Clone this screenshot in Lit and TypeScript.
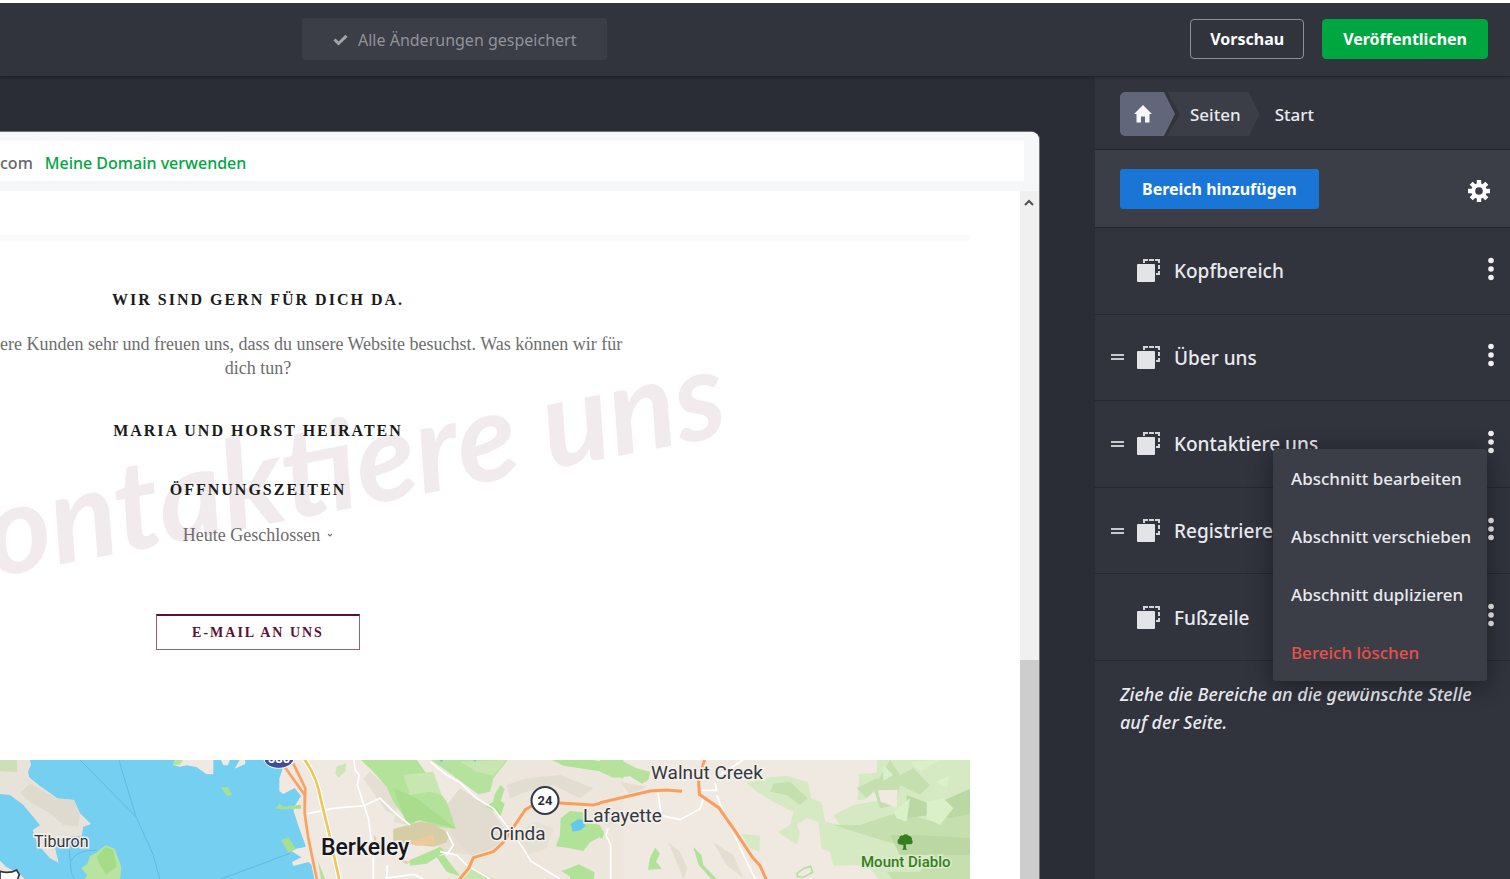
import { LitElement, html, svg, css, nothing } from "lit";
import { customElement, property, state } from "lit/decorators.js";

const duplicateIcon = svg`<svg class="dup" viewBox="0 0 24 23" width="24" height="23" aria-hidden="true">
  <rect x="0" y="5" width="18" height="18" rx="1" fill="#e3e4e7"/>
  <path d="M7 4V1H11M12 1H17M18 1H22V4M22 6V10M22 12V15H19" fill="none" stroke="#d4d6da" stroke-width="2"/>
</svg>`;

@customElement("bay-map")
export class BayMap extends LitElement {
  static styles = css`
    :host { display: block; overflow: hidden; }
    .map { display: block; width: 100%; height: 100%; font-family: Roboto, "Liberation Sans", sans-serif; }
    .town { font-size: 19px; fill: #343841; stroke: #f4f0ea; stroke-width: 3px; paint-order: stroke; }
    .small { font-size: 16px; }
    .city { font-size: 23px; font-weight: 500; fill: #14161f; }
    .park { font-size: 15px; font-weight: 500; fill: #347f1c; stroke: #dcecce; }
    .shield { font-size: 13px; font-weight: 700; fill: #2b2e38; }
    .interstate { font-size: 13px; font-weight: 700; fill: #fff; }
  `;

  render() {
    return html`<svg class="map" viewBox="0 0 970 119" preserveAspectRatio="xMinYMin slice" role="img" aria-label="Karte">
      <rect width="970" height="119" fill="#efe9e2"/>
      <g transform="translate(0 -10) scale(.33333)">
        <path d="M0 28H870L905 135L880 175L900 210L918 290L950 390H0Z" fill="#75cff0"/>
        <path d="M0 28H90L93 45L84 66L88 82L120 108L172 145L222 150L240 190L273 222L250 230L245 258L158 264L176 338L150 325L112 282L98 240L120 226L103 205L70 165L30 135L0 132Z" fill="#e8e3da"/>
        <path d="M0 28H50L52 66L0 64Z" fill="#cddfb4"/>
        <path d="M90 100L172 146L222 150L240 195L235 230L190 225L150 190L95 160L60 130Z" fill="#dfdacf"/>
        <path d="M520 45L530 28H640V72L620 73L590 52L560 46L540 50Z" fill="#efe9e2"/>
        <path d="M518 46L524 28H550L540 44Z" fill="#b5e39b"/>
        <path d="M662 28H690L684 46L670 46Z" fill="#efe9e2"/>
        <path d="M704 56L736 42L735 28H800L848 56L838 86V124L850 132L884 114L905 140L900 165L880 180L896 230L918 290L870 300L904 322L876 336L880 348L925 336L935 345L945 390H1100V28H720Z" fill="#efe9e2"/>
        <path d="M662 112L684 112L696 136L682 138Z" fill="#a9e08f"/>
        <path d="M828 176L838 160L850 170L902 164L904 176L850 178Z" fill="#a9e08f"/>
        <path d="M843 270L866 262L888 298L866 308Z" fill="#a9e08f"/>
        <path d="M244 355L262 342L270 318L292 306L316 286L344 296L364 350L360 390H250L262 376Z" fill="#b9e3a0"/>
        <path d="M290 320L316 290L340 300L350 350L318 375L300 345Z" fill="#a5dc88"/>
        <path d="M0 332L18 350L60 372L76 390H0Z" fill="#ece7de"/>
        <path d="M240 30L408 200L460 315L480 390M356 28L408 200M208 302L214 370L226 390M214 332C225 310 250 302 290 300M655 390L870 310" fill="none" stroke="#5fb9e3" stroke-width="3"/>
        <path d="M0 364Q28 372 50 360L58 374L52 390H0Z" fill="#fff" stroke="#333641" stroke-width="5"/>
      </g>
      <g transform="translate(260 -5) scale(.33333)">
        <path d="M700 12H1090V380H560L600 240Z" fill="#ece6dd"/>
        <path d="M330 50L420 130L400 200L440 210L560 150L700 190L640 300L540 290L500 210L380 170L310 70Z" fill="#e4dfd2"/>
        <path d="M600 100L690 160L740 230L700 290L640 310L570 230L560 150Z" fill="#e1dccf"/>
        <path d="M740 90L800 70L900 60L1000 100L960 130L880 90L800 110L750 130Z" fill="#e2ddd1"/>
        <path d="M820 200L880 220L860 280L800 300L760 250Z" fill="#e6e1d6"/>
        <path d="M300 12H520L620 72L695 68L740 14H560L470 14L530 100L560 140L588 222L540 216L478 196L450 210L400 140L380 96L340 50Z" fill="#b3e29a"/>
        <path d="M510 12H745L700 70L690 110L655 118L590 70Z" fill="#b5e29c"/>
        <path d="M600 20L740 14L700 62L650 50ZM430 60L520 50L545 120L510 110L450 120Z" fill="#c8e6b0"/>
        <path d="M400 100L470 130L560 200L586 220L478 194L440 205Z" fill="#a9dc8c"/>
        <path d="M230 35L258 24L256 50L236 68L226 56Z" fill="#cfe5b8"/>
        <path d="M704 118L722 90L734 102L722 138L734 146L722 182L706 170L676 154L700 140Z" fill="#b0e297"/>
        <path d="M400 222L480 200L520 206L568 236L560 262L520 275L400 262Z" fill="#d5cda6"/>
        <path d="M440 262L520 238L524 268L470 272ZM340 240L350 250L345 262ZM420 315L450 320L440 328Z" fill="#eec99b"/>
        <path d="M448 316L540 276L556 290L500 326L450 332ZM530 306L552 300L590 350L606 366L560 350Z" fill="#b0e297"/>
        <path d="M620 326L700 372H600Z" fill="#c5e6ad"/>
        <path d="M902 190L930 168L968 172L976 200L1020 210L1032 240L990 262L970 288L930 280L888 274L900 240Z" fill="#b0e297"/>
        <path d="M932 206L956 192L970 196L976 214L960 226L938 230Z" fill="#62c8ef"/>
        <path d="M904 348L932 338L956 328L1004 352L1000 380H930L930 364Z" fill="#b0e297"/>
        <path d="M875 14H990L1030 20L1090 14V70L1050 60L1030 50L910 32Z" fill="#b0e297"/>
        <path d="M536 12H552L544 22ZM640 12H652L644 22Z" fill="#62c8ef"/>
        <path d="M282 12L285 45L298 60L292 90L312 150L325 190L340 300V380M132 178L220 160L312 152M312 152L360 130L410 178L450 210M510 20L560 60L600 82L650 130L700 160L740 212L790 280L812 318L900 372M375 370L460 358L490 372M382 330L380 370M540 290L590 300L620 330L690 372M560 230L580 270L560 300" fill="none" stroke="#fff" stroke-width="5"/>
        <path d="M132 12Q170 60 184 140L206 230L238 375" fill="none" stroke="#fff" stroke-width="15"/>
        <path d="M132 12Q170 60 184 140L206 230L238 375" fill="none" stroke="#ecc75c" stroke-width="8"/>
        <path d="M76 38L134 120V175L145 250L172 380M100 26L136 100L134 175" fill="none" stroke="#fbe6cf" stroke-width="14"/>
        <path d="M76 38L134 120V175L145 250L172 380M100 26L136 100L134 175" fill="none" stroke="#f3a46a" stroke-width="8"/>
        <path d="M175 320L195 372L184 376L178 345Z" fill="#b0e297"/>
        <path d="M596 376L626 340L640 308L700 290L730 262L796 164L830 144H900L1000 150L1090 128" fill="none" stroke="#fbe6cf" stroke-width="16"/>
        <path d="M596 376L626 340L640 308L700 290L730 262L796 164L830 144H900L1000 150L1090 128" fill="none" stroke="#f3a065" stroke-width="9"/>
        <path d="M12 12C14 32 38 40 56 40C76 40 98 30 102 12Z" fill="#3d4ba0" stroke="#fff" stroke-width="3"/>
      </g>
      <g transform="translate(600 -5) scale(.33333)">
        <path d="M0 14H60L110 40L150 50L146 74L126 86L90 64L40 68L0 50Z" fill="#b6e29d"/>
        <path d="M440 84L500 68L560 62L624 82L634 130L664 142L676 200L720 210L700 180L760 150L840 136L830 105L790 136L772 134L778 56L830 54L832 12H1112V376H840L800 330L700 332L690 290L664 280L656 200L620 190L590 210L600 232L590 268L534 232L570 210L580 170L520 140L470 110Z" fill="#d5eac2"/>
        <path d="M424 236L480 242L478 290L450 280Z" fill="#d5eac2"/>
        <path d="M520 86L570 80L624 130L600 150L560 120L510 110ZM770 100L830 70L850 80L800 130ZM870 14L900 60L940 40L990 90L960 120L900 90L890 150L840 160L820 100ZM780 210L900 170L1000 200L1112 170V290L1050 330L950 280L860 260L700 210ZM1030 250L1112 230V376H880L860 350L960 350Z" fill="#c5dfae"/>
        <path d="M920 120L1000 150L1112 100V176L1050 190L990 180L920 190ZM870 240L960 240L1112 250V300L900 300Z" fill="#bbd8a4"/>
        <path d="M850 30L880 60L850 78ZM930 20L1020 14L960 50ZM1010 80L1050 60L1040 100ZM880 170L930 130L920 200L890 190ZM980 140L1030 130L1060 160L1020 210L980 190Z" fill="#d9f0c8"/>
        <path d="M834 106L894 104L890 158L842 140Z" fill="#efe9e2"/>
        <path d="M150 308L166 278L180 296L168 320L186 342L144 344ZM280 276L304 300L310 330L350 372H334L296 330ZM0 220L12 230L8 250H0Z" fill="#b0e297"/>
        <path d="M590 356L612 340L632 334L638 352L612 366L594 366Z" fill="none" stroke="#b6e29d" stroke-width="5"/>
        <path d="M205 262L240 290L262 340L250 372L225 310ZM340 262L400 300L430 370L380 330ZM60 80L140 95L90 120ZM40 180L70 190L20 210Z" fill="#e4ded2"/>
        <path d="M172 100L184 182L240 194L300 162L312 124M300 106H350L345 80M350 120L370 170L440 320L466 372M430 14L360 60M24 220L18 240L32 270V372" fill="none" stroke="#fff" stroke-width="5"/>
        <path d="M0 143L150 108L200 105L246 109M314 12L296 80L298 118L356 158L400 220L456 305L480 332L500 376" fill="none" stroke="#fbe6cf" stroke-width="15"/>
        <path d="M0 143L150 108L200 105L246 109M314 12L296 80L298 118L356 158L400 220L456 305L480 332L500 376" fill="none" stroke="#f3a065" stroke-width="9"/>
        <path d="M896 268Q888 258 898 250Q898 240 908 242Q918 234 926 242Q936 244 936 254Q942 266 930 268L918 268V280L922 284H906L910 280V270Z" fill="#347f1c"/>
      </g>
      <circle cx="545" cy="40.500" r="13.500" fill="#fff" stroke="#343841" stroke-width="2"/>
      <text class="interstate" x="279" y="3" text-anchor="middle">580</text>
      <text class="shield" x="545" y="45" text-anchor="middle">24</text>
      <text class="town small" x="34" y="87">Tiburon</text>
      <text class="town city" x="321" y="95">Berkeley</text>
      <text class="town" x="490" y="80">Orinda</text>
      <text class="town" x="583" y="62">Lafayette</text>
      <text class="town" x="651" y="19">Walnut Creek</text>
      <text class="town park" x="861" y="107">Mount Diablo</text>
    </svg>`;
  }
}

@customElement("site-preview")
export class SitePreview extends LitElement {
  static styles = css`
    :host { display: flex; flex-direction: column; min-width: 0; overflow: hidden; border-radius: 0 8px 0 0; background: #fff; box-shadow: 0 0 0 1px #6f7178; }
    .address { display: flex; background: #f5f7f9; padding: 9px 15px 10px 0; }
    .field { flex: 1; height: 40px; display: flex; align-items: center; gap: 12px; background: #fff; font: 500 16px/24px "Noto Sans", sans-serif; color: #65676c; padding-top: 4px; box-sizing: border-box; }
    .field a { color: #00a63f; text-decoration: none; }
    .frame { flex: 1; min-height: 0; display: grid; grid-template-columns: 1fr 19px; }
    .page { min-width: 0; min-height: 0; overflow: hidden; position: relative; padding-right: 50px; display: flex; flex-direction: column; color: #6d6d6d; font: 18px/24px "Liberation Serif", serif; }
    .rule { height: 6px; margin: 44px 0 0; border: 0; background: #fafafa; flex: none; }
    .mark { position: absolute; right: 298px; top: 136px; transform: rotate(-11deg); transform-origin: right center; font: italic 700 124px/120px Lato, sans-serif; white-space: nowrap; color: #f2ebee; }
    .contact { position: relative; width: 516px; display: flex; flex-direction: column; align-items: center; padding-top: 47px; }
    h2 { margin: 0; font: 700 16px/24px "Liberation Serif", serif; letter-spacing: 2px; color: #1b1b1b; text-transform: uppercase; white-space: nowrap; }
    .intro { margin: 20px 0 39px; display: flex; flex-direction: column; align-items: center; align-self: stretch; }
    .wide { align-self: flex-start; white-space: nowrap; }
    .hours-title { margin-top: 35px; }
    .hours { margin: 21px 0 0; padding: 0; border: 0; background: none; color: inherit; font: inherit; display: flex; align-items: center; gap: 7px; }
    .mail { margin: 67px 0 0; width: 204px; height: 36px; border: 1px solid #9a6078; border-top: 2px solid #5c0f33; color: #5c0f33; text-decoration: none; text-align: center; font: 700 14px/33px "Liberation Serif", serif; letter-spacing: 2px; box-sizing: border-box; background: #fff; }
    .map { margin-top: 110px; flex: 1; min-height: 119px; }
    .scroll { background: #f0f0f0; display: flex; flex-direction: column; }
    .scroll svg { margin: 8px 4px; flex: none; }
    .thumb { flex: 1; margin-top: 445px; background: #cdcdcd; }
  `;

  render() {
    return html`
      <div class="address">
        <div class="field"><span>com</span><a href="#domain">Meine Domain verwenden</a></div>
      </div>
      <div class="frame">
        <div class="page">
          <hr class="rule" />
          <div class="mark">Kontaktiere uns</div>
          <section class="contact">
            <h2>Wir sind gern für dich da.</h2>
            <p class="intro">
              <span class="wide">ere Kunden sehr und freuen uns, dass du unsere Website besuchst. Was können wir für</span>
              <span>dich tun?</span>
            </p>
            <h2>Maria und Horst heiraten</h2>
            <h2 class="hours-title">Öffnungszeiten</h2>
            <button class="hours">Heute Geschlossen
              <svg width="6" height="4" viewBox="0 0 6 4" aria-hidden="true"><path d="M1 1L3 3L5 1" fill="none" stroke="#777" stroke-width="1.200"/></svg>
            </button>
            <a class="mail" href="#mail">E-MAIL AN UNS</a>
          </section>
          <bay-map class="map"></bay-map>
        </div>
        <div class="scroll">
          <svg width="10" height="8" viewBox="0 0 10 8" aria-hidden="true"><path d="M1 6L5 2L9 6" fill="none" stroke="#505050" stroke-width="2"/></svg>
          <div class="thumb"></div>
        </div>
      </div>`;
  }
}

interface Section { name: string; movable: boolean; }

@customElement("section-panel")
export class SectionPanel extends LitElement {
  @property({ attribute: false }) sections: Section[] = [];
  @state() open = 2;

  static styles = css`
    :host { display: flex; flex-direction: column; background: #31333d; color: #e9eaed; font-family: "Noto Sans", sans-serif; }
    .crumbs { display: flex; align-items: center; height: 73px; padding: 2px 25px 0; box-sizing: border-box; border-bottom: 1px solid #23252c; font-size: 17px; font-weight: 500; }
    .crumbs a, .crumbs span { color: inherit; text-decoration: none; height: 44px; display: flex; align-items: center; }
    .home { width: 55px; box-sizing: border-box; padding-left: 14px; background: #62667a; border-radius: 5px 0 0 5px; clip-path: polygon(0 0, 44px 0, 100% 50%, 44px 100%, 0 100%); }
    .crumbs .pages { margin-left: -8px; padding: 0 19px 0 23px; background: #3b3d47; clip-path: polygon(0 0, calc(100% - 11px) 0, 100% 50%, calc(100% - 11px) 100%, 0 100%, 13px 50%); }
    .crumbs .here { margin-left: 15px; }
    .tools { display: flex; align-items: center; justify-content: space-between; height: 78px; padding: 0 20px 0 25px; box-sizing: border-box; background: #3b3d47; border-bottom: 1px solid #23252c; }
    button { font-family: inherit; border: 0; padding: 0; background: none; color: inherit; }
    .add { height: 40px; padding: 0 22px; border-radius: 3px; background: #1976d6; color: #fff; font-size: 16px; font-weight: 700; }
    .gear { display: flex; margin-top: 4px; }
    .list { list-style: none; margin: 0; padding: 0; min-height: 433px; display: grid; grid-auto-rows: 1fr; }
    .row { position: relative; display: grid; grid-template-columns: 13px 24px 1fr auto; align-items: center; column-gap: 13px; padding: 0 16px; border-bottom: 1px solid #262830; font-size: 19px; font-weight: 500; }
    .name { white-space: nowrap; padding-top: 1px; }
    .grip { display: block; height: 6px; border: solid #c8c9cc; border-width: 2px 0; box-sizing: border-box; }
    .more { display: flex; margin-top: -4px; }
    .menu { position: absolute; z-index: 2; right: 23px; top: 48px; background: #3b3d47; border-radius: 3px; box-shadow: 0 4px 24px rgba(0, 0, 0, 0.4); display: flex; flex-direction: column; width: 214px; }
    .menu button { height: 58px; padding: 0 18px; text-align: left; font-size: 17px; font-weight: 500; white-space: nowrap; }
    .menu .danger { color: #e8504a; }
    .hint { margin: 19px 25px; font-size: 18px; line-height: 28px; font-style: italic; font-weight: 500; }
  `;

  render() {
    return html`
      <nav class="crumbs" aria-label="Pfad">
        <a class="home" href="#home" aria-label="Home"><svg width="18" height="18" viewBox="0 0 18 18" aria-hidden="true"><path d="M9 0L18 9H15.500V17.500H11V11.500H7V17.500H2.500V9H0Z" fill="#f7f7f8"/></svg></a>
        <a class="pages" href="#pages">Seiten</a>
        <span class="here">Start</span>
      </nav>
      <div class="tools">
        <button class="add">Bereich hinzufügen</button>
        <button class="gear" aria-label="Einstellungen"><svg width="22" height="22" viewBox="0 0 22 22" aria-hidden="true">
          <circle cx="11" cy="11" r="5.800" fill="none" stroke="#fff" stroke-width="4"/>
          <g stroke="#fff" stroke-width="4.400"><path d="M11 0V4M11 18V22M0 11H4M18 11H22M3.200 3.200L6 6M16 16L18.800 18.800M3.200 18.800L6 16M16 6L18.800 3.200"/></g>
        </svg></button>
      </div>
      <ul class="list">
        ${this.sections.map((s, i) => html`<li class="row">
          ${s.movable ? html`<i class="grip"></i>` : html`<i></i>`}
          ${duplicateIcon}
          <span class="name">${s.name}</span>
          <button class="more" aria-label="Optionen" @click=${() => (this.open = this.open === i ? -1 : i)}>
            <svg width="6" height="24" viewBox="0 0 6 24" aria-hidden="true"><g fill="#f0f0f1"><circle cx="3" cy="3.500" r="2.800"/><circle cx="3" cy="12" r="2.800"/><circle cx="3" cy="20.500" r="2.800"/></g></svg>
          </button>
          ${this.open === i ? html`<div class="menu">
            <button>Abschnitt bearbeiten</button>
            <button>Abschnitt verschieben</button>
            <button>Abschnitt duplizieren</button>
            <button class="danger">Bereich löschen</button>
          </div>` : nothing}
        </li>`)}
      </ul>
      <p class="hint">Ziehe die Bereiche an die gewünschte Stelle auf der Seite.</p>`;
  }
}

@customElement("app-root")
export class AppRoot extends LitElement {
  static styles = css`
    :host { display: flex; flex-direction: column; height: 100vh; overflow: hidden; box-sizing: border-box; border-top: 3px solid #fff; background: #2b2d36; font-family: "Noto Sans", sans-serif; }
    .bar { flex: none; display: flex; align-items: flex-start; height: 74px; box-sizing: border-box; padding: 15px 22px 0 302px; background: #31333d; border-bottom: 1px solid #212329; box-shadow: 0 1px 3px rgba(0, 0, 0, 0.2); position: relative; }
    .saved { display: flex; align-items: center; gap: 10px; height: 42px; padding: 2px 31px 0; box-sizing: border-box; border-radius: 3px; background: #3b3d47; color: #929397; font-size: 16px; }
    .actions { margin: 1px 0 0 auto; display: flex; gap: 18px; }
    .actions button { height: 40px; padding: 0 19px; border: 1px solid #8d909c; border-radius: 4px; background: none; color: #fff; font: 700 16px/20px "Noto Sans", sans-serif; }
    .actions .publish { border-color: #00a63f; background: #00a63f; padding: 0 20px; }
    .body { flex: 1; min-height: 0; display: grid; grid-template-columns: 1fr 415px; column-gap: 56px; }
    .preview { margin-top: 55px; }
  `;

  private sections: Section[] = [
    { name: "Kopfbereich", movable: false },
    { name: "Über uns", movable: true },
    { name: "Kontaktiere uns", movable: true },
    { name: "Registriere", movable: true },
    { name: "Fußzeile", movable: false },
  ];

  render() {
    return html`
      <header class="bar">
        <div class="saved"><svg width="15" height="12" viewBox="0 0 15 12" aria-hidden="true"><path d="M1.500 5.500L5.500 9.500L13.500 1.800" fill="none" stroke="#a3a4a8" stroke-width="3"/></svg>Alle Änderungen gespeichert</div>
        <div class="actions"><button>Vorschau</button><button class="publish">Veröffentlichen</button></div>
      </header>
      <div class="body">
        <site-preview class="preview"></site-preview>
        <section-panel .sections=${this.sections}></section-panel>
      </div>`;
  }
}
